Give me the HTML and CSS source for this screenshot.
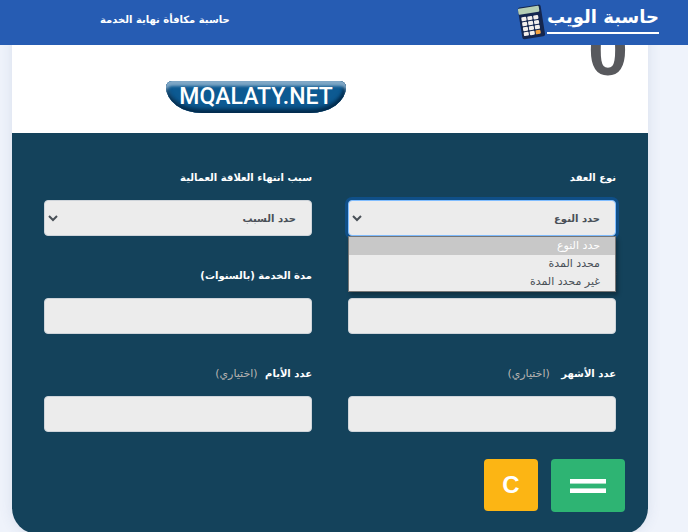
FILE: index.html
```html
<!DOCTYPE html>
<html lang="ar" dir="rtl">
<head>
<meta charset="utf-8">
<meta name="viewport" content="width=device-width, initial-scale=1">
<title>حاسبة مكافأة نهاية الخدمة</title>
<link rel="stylesheet" href="styles.css">
</head>
<body>
<header class="topbar">
  <a class="logo" href="#">
    <span class="logo-text">حاسبة الويب</span>
    <svg class="logo-icon" viewBox="0 0 28 36" aria-hidden="true">
      <g transform="rotate(-9 14 18)">
        <rect x="3" y="2" width="23" height="32" rx="2" fill="#14264f"/>
        <rect x="3" y="3" width="21" height="6" rx="1" fill="#b5ceb5"/>
        <g fill="#f3efec">
          <rect x="5" y="12" width="5" height="4" rx="1"/><rect x="11" y="12" width="5" height="4" rx="1"/><rect x="17" y="12" width="5" height="4" rx="1"/>
          <rect x="5" y="17" width="5" height="4" rx="1"/><rect x="11" y="17" width="5" height="4" rx="1"/><rect x="17" y="17" width="5" height="4" rx="1"/>
          <rect x="5" y="22" width="5" height="4" rx="1"/><rect x="11" y="22" width="5" height="4" rx="1"/><rect x="17" y="22" width="5" height="4" rx="1"/>
          <rect x="5" y="27" width="5" height="4" rx="1"/><rect x="11" y="27" width="5" height="4" rx="1"/>
        </g>
        <rect x="17" y="27" width="5" height="4" rx="1" fill="#f4a340"/>
      </g>
    </svg>
  </a>
  <a class="title" href="#">حاسبة مكافأة نهاية الخدمة</a>
</header>
<main class="card">
  <section class="result">
    <output class="total">0</output>
    <div class="badge-row"><span class="badge" dir="ltr">MQALATY.NET</span></div>
  </section>
  <form class="form">
    <div class="fields">
      <div class="field">
        <label for="type">نوع العقد</label>
        <div class="select open">
          <select id="type"><option>حدد النوع</option></select>
          <svg class="chevron" viewBox="0 0 10 8" aria-hidden="true"><path d="M1 2l4 4 4-4"/></svg>
          <ul class="menu">
            <li class="active">حدد النوع</li>
            <li>محدد المدة</li>
            <li>غير محدد المدة</li>
          </ul>
        </div>
      </div>
      <div class="field">
        <label for="reason">سبب انتهاء العلاقة العمالية</label>
        <div class="select">
          <select id="reason"><option>حدد السبب</option></select>
          <svg class="chevron" viewBox="0 0 10 8" aria-hidden="true"><path d="M1 2l4 4 4-4"/></svg>
        </div>
      </div>
      <div class="field">
        <label for="salary"><span class="required">*</span></label>
        <input id="salary" type="text">
      </div>
      <div class="field">
        <label for="years">مدة الخدمة (بالسنوات)</label>
        <input id="years" type="text">
      </div>
      <div class="field">
        <label for="months">عدد الأشهر <span class="optional wide">(اختياري)</span></label>
        <input id="months" type="text">
      </div>
      <div class="field">
        <label for="days">عدد الأيام <span class="optional">(اختياري)</span></label>
        <input id="days" type="text">
      </div>
    </div>
    <div class="actions">
      <button class="equals" type="button" aria-label="=">
        <svg viewBox="0 0 36 14" aria-hidden="true"><path fill="#fff" d="M0 0h36v4H0zM0 10h36v4H0z"/><path fill="#a9dfc4" d="M0 4h36v1H0zM0 9h36v1H0z"/></svg>
      </button>
      <button class="clear" type="reset">C</button>
    </div>
  </form>
</main>
</body>
</html>
```
FILE: styles.css
```css
* { box-sizing: border-box; }
body {
  margin: 0;
  background: #eff3fb;
  font-family: "DejaVu Sans", "Liberation Sans", sans-serif;
  font-size: 11px;
}
.topbar {
  position: fixed;
  z-index: 5;
  inset: 0 0 auto 0;
  height: 45px;
  padding: 0 29px 0 100px;
  display: flex;
  align-items: flex-start;
  justify-content: space-between;
  background: #265cb3;
}
.topbar a { color: #fff; text-decoration: none; font-weight: bold; }
.logo { display: flex; gap: 2px; padding-top: 4px; }
.logo-text {
  height: 30px;
  font-size: 18px;
  line-height: 26px;
  border-bottom: 2px solid #fff;
  white-space: nowrap;
}
.logo-icon { width: 28px; height: 36px; }
.topbar .title { font-size: 10px; line-height: 40px; }
.card {
  margin: 0 40px 0 12px;
  border-radius: 0 0 26px 26px;
  background: #fff;
  box-shadow: 0 0 14px rgba(60, 80, 130, 0.12);
}
.result { padding: 8px 20px 20px; }
.total {
  display: block;
  height: 73px;
  color: #58595d;
  font: bold 72px/84px "Liberation Sans", sans-serif;
}
.badge-row { display: flex; justify-content: flex-end; padding-left: 134px; }
.badge {
  width: 180px;
  height: 32px;
  border-radius: 6px 6px 36px 36px / 6px 6px 26px 26px;
  background: #0d5a92;
  box-shadow: inset 0 5px 3px #7fa7c6, inset 0 -4px 4px #022a4b, inset 3px 0 3px #2c6e9f, inset -3px 0 3px #063c66;
  color: #fff;
  font: 500 23px/32px Roboto, sans-serif;
  text-align: center;
}
.form {
  padding: 35px 0 22px;
  border-radius: 0 0 26px 26px;
  background: #14425b;
}
.fields {
  display: grid;
  grid-template-columns: 1fr 1fr;
  gap: 30px 36px;
  padding: 0 32px;
}
.field { display: flex; flex-direction: column; gap: 12px; }
label { height: 20px; font-size: 10px; line-height: 20px; color: #fff; font-weight: bold; }
.optional { color: #b9b5b2; font-size: 11px; font-weight: normal; margin-right: 4px; }
.wide { margin-right: 8px; }
.required { color: #e0384c; }
select, input {
  display: block;
  width: 100%;
  height: 36px;
  padding: 0 15px;
  border: 1px solid #ced4da;
  border-radius: 4px;
  background: #ececec;
  color: #495057;
  font: bold 10px "DejaVu Sans", sans-serif;
  appearance: none;
}
.select { position: relative; }
.open select {
  border-color: #80bdff;
  box-shadow: 0 0 0 3px #0f4f88;
}
.chevron {
  position: absolute;
  left: 4px;
  top: 14px;
  width: 10px;
  height: 8px;
  fill: none;
  stroke: #495057;
  stroke-width: 2;
}
.menu {
  position: absolute;
  z-index: 2;
  top: 36px;
  left: 0;
  right: 0;
  margin: 0;
  padding: 0;
  border: 1px solid #767676;
  background: #ececec;
  color: #495057;
  list-style: none;
  box-shadow: 2px 3px 4px rgba(0, 0, 0, 0.3);
}
.menu li { padding: 0 15px; line-height: 18px; }
.menu .active { background: #c8c8c8; color: #fff; }
.actions {
  display: flex;
  align-items: flex-start;
  gap: 13px;
  padding: 27px 23px 0;
}
button { border: 0; border-radius: 4px; color: #fff; padding: 0; }
.equals {
  display: flex;
  align-items: center;
  justify-content: center;
  width: 74px;
  height: 53px;
  background: #2eb473;
}
.equals svg { width: 36px; height: 14px; }
.clear {
  width: 54px;
  height: 52px;
  background: #fcb514;
  font: bold 24px "Liberation Sans", sans-serif;
}
```
